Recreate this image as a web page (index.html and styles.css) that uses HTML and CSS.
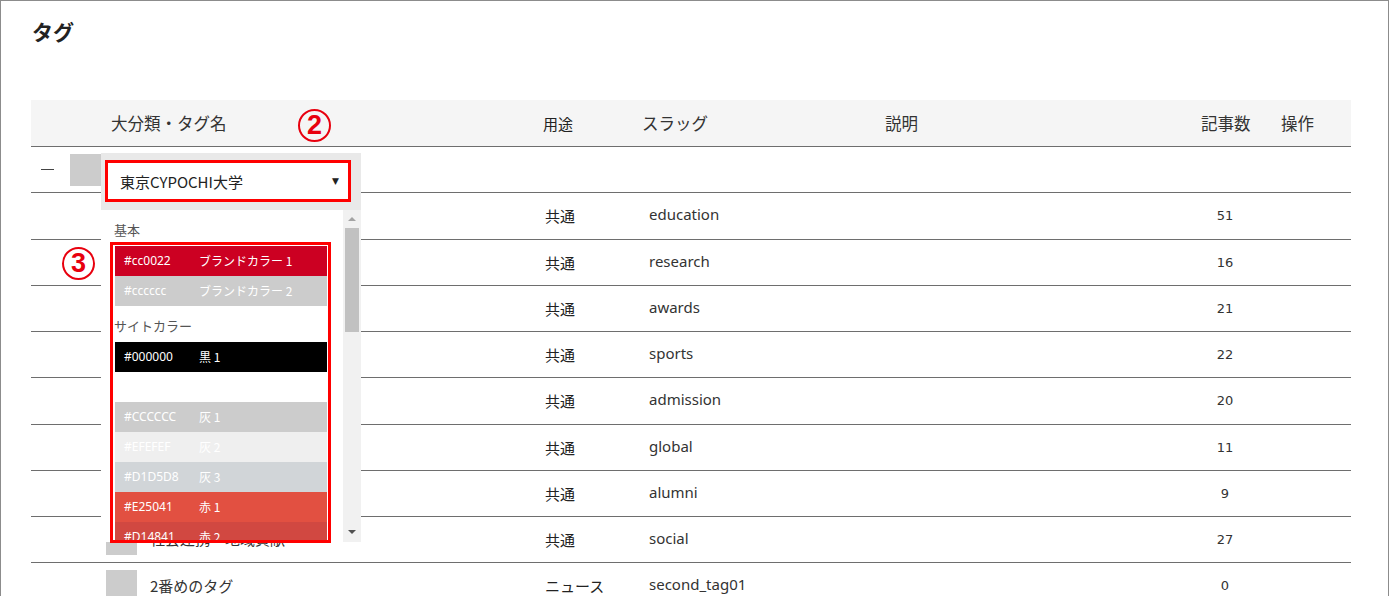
FILE: index.html
```html
<!DOCTYPE html>
<html lang="ja">
<head>
<meta charset="utf-8">
<title>タグ</title>
<link rel="stylesheet" href="styles.css">
</head>
<body>
<div class="page">
  <h1 class="title">タグ</h1>
  <div class="table">
    <div class="row head">
      <div class="c-name">大分類・タグ名</div>
      <div class="c-use">用途</div>
      <div class="c-slug">スラッグ</div>
      <div class="c-desc">説明</div>
      <div class="c-count">記事数</div>
      <div class="c-ops">操作</div>
    </div>
    <div class="row parent">
      <div class="c-name"><span class="dash"></span><span class="sq sq-parent"></span></div>
      <div class="c-use"></div><div class="c-slug"></div><div class="c-desc"></div><div class="c-count"></div><div class="c-ops"></div>
    </div>
    <div class="row">
      <div class="c-name"><span class="sq"></span></div>
      <div class="c-use">共通</div><div class="c-slug">education</div><div class="c-desc"></div><div class="c-count">51</div><div class="c-ops"></div>
    </div>
    <div class="row">
      <div class="c-name"><span class="sq"></span></div>
      <div class="c-use">共通</div><div class="c-slug">research</div><div class="c-desc"></div><div class="c-count">16</div><div class="c-ops"></div>
    </div>
    <div class="row">
      <div class="c-name"><span class="sq"></span></div>
      <div class="c-use">共通</div><div class="c-slug">awards</div><div class="c-desc"></div><div class="c-count">21</div><div class="c-ops"></div>
    </div>
    <div class="row">
      <div class="c-name"><span class="sq"></span></div>
      <div class="c-use">共通</div><div class="c-slug">sports</div><div class="c-desc"></div><div class="c-count">22</div><div class="c-ops"></div>
    </div>
    <div class="row">
      <div class="c-name"><span class="sq"></span></div>
      <div class="c-use">共通</div><div class="c-slug">admission</div><div class="c-desc"></div><div class="c-count">20</div><div class="c-ops"></div>
    </div>
    <div class="row">
      <div class="c-name"><span class="sq"></span></div>
      <div class="c-use">共通</div><div class="c-slug">global</div><div class="c-desc"></div><div class="c-count">11</div><div class="c-ops"></div>
    </div>
    <div class="row">
      <div class="c-name"><span class="sq"></span></div>
      <div class="c-use">共通</div><div class="c-slug">alumni</div><div class="c-desc"></div><div class="c-count">9</div><div class="c-ops"></div>
    </div>
    <div class="row">
      <div class="c-name"><span class="sq"></span><span class="nm nm-under">社会連携・地域貢献</span></div>
      <div class="c-use">共通</div><div class="c-slug">social</div><div class="c-desc"></div><div class="c-count">27</div><div class="c-ops"></div>
    </div>
    <div class="row">
      <div class="c-name"><span class="sq"></span><span class="nm">2番めのタグ</span></div>
      <div class="c-use">ニュース</div><div class="c-slug">second_tag01</div><div class="c-desc"></div><div class="c-count">0</div><div class="c-ops"></div>
    </div>
  </div>

  <div class="dropdown">
    <div class="dd-top">
      <div class="select"><span>東京CYPOCHI大学</span><span class="arrow">▼</span></div>
    </div>
    <div class="dd-body">
      <div class="list">
        <div class="group">基本</div>
        <div class="opt o-brand1"><span class="hex">#cc0022</span><span>ブランドカラー 1</span></div>
        <div class="opt o-brand2"><span class="hex">#cccccc</span><span>ブランドカラー 2</span></div>
        <div class="group">サイトカラー</div>
        <div class="opt o-black"><span class="hex">#000000</span><span>黒 1</span></div>
        <div class="opt o-white"><span class="hex">#FFFFFF</span><span>白 1</span></div>
        <div class="opt o-gray1"><span class="hex">#CCCCCC</span><span>灰 1</span></div>
        <div class="opt o-gray2"><span class="hex">#EFEFEF</span><span>灰 2</span></div>
        <div class="opt o-gray3"><span class="hex">#D1D5D8</span><span>灰 3</span></div>
        <div class="opt o-red1"><span class="hex">#E25041</span><span>赤 1</span></div>
        <div class="opt o-red2"><span class="hex">#D14841</span><span>赤 2</span></div>
      </div>
      <div class="scrollbar">
        <span class="sb-up"></span>
        <span class="sb-thumb"></span>
        <span class="sb-down"></span>
      </div>
    </div>
  </div>

  <div class="annot-box"></div>
  <span class="marker m2">2</span>
  <span class="marker m3">3</span>
</div>
</body>
</html>
```

FILE: styles.css
```css
html, body {
  margin: 0;
  padding: 0;
  overflow: hidden;
  background: #fff;
}
.page {
  position: relative;
  box-sizing: border-box;
  width: 1389px;
  height: 700px;
  border: 1px solid #8c8c8c;
  padding-top: 18px;
  font-family: "Noto Sans CJK JP", "Noto Sans", sans-serif;
  color: #333;
}
.title {
  margin: 0;
  padding-left: 31px;
  font-size: 21px;
  line-height: 24px;
  font-weight: bold;
  color: #222;
}
.table {
  margin-top: 57px;
  margin-left: 30px;
  width: 1320px;
}
.row {
  display: grid;
  grid-template-columns: 500px 99px 243px 316px 80px 82px;
  align-items: center;
  height: 45.25px;
  border-bottom: 1px solid #6e6e6e;
}
.row.head {
  height: 46px;
  background: #f5f5f5;
  font-size: 16.5px;
  color: #333;
}
.head .c-name { padding-left: 80px; }
.head .c-use, .head .c-slug, .head .c-desc, .head .c-count, .head .c-ops { padding-left: 12px; }

.c-name {
  display: flex;
  align-items: center;
  padding-left: 75px;
}
.parent .c-name { padding-left: 10px; }
.dash {
  width: 13px;
  height: 1px;
  background: #444;
  margin-right: 16px;
}
.sq {
  width: 31px;
  height: 31px;
  background: #cccccc;
  margin-right: 13px;
}
.sq-parent { height: 32px; margin-right: 0; }
.nm {
  font-size: 15px;
  color: #333;
}
.nm-under { margin-top: -3px; }
.row .c-use {
  font-size: 15px;
  color: #222;
}
.row:not(.head) .c-use { padding-left: 14px; }
.row:not(.head) .c-slug {
  padding-left: 19px;
  font-family: "Noto Sans", "Noto Sans CJK JP", sans-serif;
  font-size: 15px;
  color: #333;
  margin-top: -3px;
}
.row:not(.head) .c-count {
  text-align: center;
  padding-right: 8px;
  font-family: "DejaVu Sans", sans-serif;
  font-size: 13px;
  color: #333;
}

/* dropdown overlay */
.dropdown {
  position: absolute;
  left: 100px;
  top: 152px;
  width: 260px;
  height: 389px;
  display: flex;
  flex-direction: column;
  background: #fff;
  z-index: 2;
}
.dd-top {
  height: 57px;
  box-sizing: border-box;
  background: #e9e9e9;
  padding: 7px 0 0 4px;
}
.select {
  box-sizing: border-box;
  width: 246px;
  height: 42px;
  border: 3px solid #ff0000;
  background: #fff;
  display: flex;
  align-items: center;
  justify-content: space-between;
  padding: 0 9px 0 12px;
  font-size: 15px;
  color: #222;
}
.arrow {
  font-size: 9px;
  color: #222;
  font-family: "DejaVu Sans", sans-serif;
}
.dd-body {
  flex: 1;
  display: flex;
  overflow: hidden;
}
.list {
  flex: 1;
  padding-left: 13px;
  background: #fff;
  overflow: hidden;
}
.group {
  height: 36px;
  box-sizing: border-box;
  padding-top: 4px;
  line-height: 32px;
  font-size: 13px;
  color: #555;
}
.opt {
  width: 212px;
  margin-left: 1px;
  height: 30px;
  line-height: 30px;
  box-sizing: border-box;
  padding-left: 9px;
  display: flex;
  font-size: 12px;
  color: #fff;
}
.hex {
  width: 75px;
  font-family: "Noto Sans", sans-serif;
}
.o-brand1 { background: #cc0022; }
.o-brand2 { background: #cccccc; }
.o-black { background: #000000; }
.o-white { background: #ffffff; }
.o-gray1 { background: #cccccc; }
.o-gray2 { background: #efefef; }
.o-gray3 { background: #d1d5d8; }
.o-red1 { background: #e25041; }
.o-red2 { background: #d14841; }

.scrollbar {
  position: relative;
  width: 18px;
  background: #f1f1f1;
}
.sb-up {
  position: absolute;
  left: 5px;
  top: 7px;
  border-left: 4px solid transparent;
  border-right: 4px solid transparent;
  border-bottom: 4px solid #a3a3a3;
}
.sb-thumb {
  position: absolute;
  left: 2px;
  top: 18px;
  width: 14px;
  height: 104px;
  background: #c1c1c1;
}
.sb-down {
  position: absolute;
  left: 5px;
  bottom: 8px;
  border-left: 4px solid transparent;
  border-right: 4px solid transparent;
  border-top: 4px solid #505050;
}

/* annotations */
.annot-box {
  position: absolute;
  left: 109px;
  top: 241px;
  width: 221px;
  height: 301px;
  box-sizing: border-box;
  border: 3px solid #ff0000;
  z-index: 3;
}
.marker {
  position: absolute;
  width: 33px;
  height: 33px;
  box-sizing: border-box;
  border: 2px solid #e8000e;
  border-radius: 50%;
  color: #e8000e;
  font-family: "Liberation Sans", sans-serif;
  font-weight: bold;
  font-size: 27px;
  line-height: 29px;
  text-align: center;
  z-index: 4;
  background: transparent;
}
.m2 { left: 297px; top: 108px; }
.m3 { left: 61px; top: 246px; }
```
